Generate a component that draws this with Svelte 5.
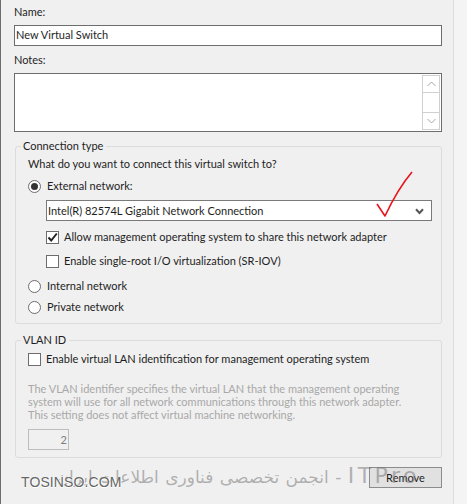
<script>
    let name = 'New Virtual Switch';
</script>

<div class="page">
    <div class="panel">
        <div class="label">Name:</div>
        <div class="field name">{name}</div>
        <div class="label notes-label">Notes:</div>
        <div class="field notes">
            <div class="scrollbar">
                <div class="arrow">
                    <svg width="9" height="6" viewBox="0 0 9 6"><path d="M0.5 5L4.5 1L8.5 5" fill="none" stroke="#a6a6a6" stroke-width="1"/></svg>
                </div>
                <div class="track"></div>
                <div class="arrow">
                    <svg width="9" height="6" viewBox="0 0 9 6"><path d="M0.5 1L4.5 5L8.5 1" fill="none" stroke="#a6a6a6" stroke-width="1"/></svg>
                </div>
            </div>
        </div>

        <fieldset class="group connection">
            <legend>Connection type</legend>
            <div class="question">What do you want to connect this virtual switch to?</div>
            <div class="option external"><span class="radio checked"></span>External network:</div>
            <div class="combo">
                <span>Intel(R) 82574L Gigabit Network Connection</span>
                <svg width="9" height="7" viewBox="0 0 9 7"><path d="M1 1.2L4.5 5L8 1.2" fill="none" stroke="#555" stroke-width="2"/></svg>
            </div>
            <div class="option sub share">
                <span class="box">
                    <svg width="11" height="11" viewBox="0 0 11 11"><path d="M1.5 5.5L4.2 8.5L9.8 1.5" fill="none" stroke="#222" stroke-width="2"/></svg>
                </span>Allow management operating system to share this network adapter
            </div>
            <div class="option sub iov"><span class="box"></span>Enable single-root I/O virtualization (SR-IOV)</div>
            <div class="option internal"><span class="radio"></span>Internal network</div>
            <div class="option private"><span class="radio"></span>Private network</div>
        </fieldset>

        <fieldset class="group vlan">
            <legend>VLAN ID</legend>
            <div class="option enable"><span class="box"></span>Enable virtual LAN identification for management operating system</div>
            <p class="hint">The VLAN identifier specifies the virtual LAN that the management operating system will use for all network communications through this network adapter. This setting does not affect virtual machine networking.</p>
            <div class="vlan-id">2</div>
        </fieldset>

        <div class="actions">
            <button class="remove">Remove</button>
        </div>
    </div>

    <svg class="tick" width="50" height="54" viewBox="0 0 50 54">
        <path d="M1 33L9 45C17 28 25 14 36 1" fill="none" stroke="#e8141c" stroke-width="1.6" stroke-linejoin="round"/>
    </svg>
    <div class="mark-fa" dir="rtl"><span class="mark-latin">ITPro</span> - انجمن تخصصی فناوری اطلاعات ایران</div>
    <div class="mark-en">TOSINSO.COM</div>
</div>

<style>
    :global(body) {
        margin: 0;
        background: #f4f4f4;
    }

    .page {
        position: relative;
        width: 467px;
        height: 504px;
        overflow: hidden;
        font-family: Lato, 'Noto Sans', sans-serif;
        font-size: 11px;
        line-height: 16px;
        color: #1e1e1e;
    }

    .panel {
        box-sizing: border-box;
        width: 454px;
        height: 504px;
        padding: 4px 11px 0 13px;
        background: #f0f0f0;
        border-left: 1px solid #6e6e6e;
        border-right: 1px solid #dcdcdc;
    }

    .field {
        box-sizing: border-box;
        width: 428px;
        background: #fff;
        border: 1px solid #6d6d6d;
    }

    .name {
        height: 21px;
        margin-top: 5px;
        padding: 0 1px;
        line-height: 18px;
    }

    .notes-label {
        margin-top: 6px;
    }

    .notes {
        height: 59px;
        margin-top: 5px;
        display: flex;
        justify-content: flex-end;
        padding: 1px;
    }

    .scrollbar {
        width: 16px;
        display: flex;
        flex-direction: column;
        border: 1px solid #d0d0d0;
    }

    .arrow {
        height: 16px;
        display: flex;
        align-items: center;
        justify-content: center;
    }

    .track {
        flex: 1;
        border-top: 1px solid #d0d0d0;
        border-bottom: 1px solid #d0d0d0;
    }

    .group {
        box-sizing: border-box;
        width: 427px;
        margin: 0 0 0 1px;
        padding: 0 0 0 12px;
        border: 1px solid #dcdcdc;
        border-radius: 3px;
        min-inline-size: 0;
    }

    .group legend {
        margin-left: -7px;
        padding: 0 3px 0 2px;
        line-height: 14px;
    }

    .connection {
        height: 185px;
        margin-top: 7px;
    }

    .vlan {
        height: 125px;
        margin-top: 9px;
    }

    .question {
        margin-top: 3px;
    }

    .option {
        display: flex;
        align-items: center;
        white-space: nowrap;
    }

    .external {
        margin-top: 6px;
    }

    .radio {
        box-sizing: border-box;
        width: 13px;
        height: 13px;
        margin-right: 6px;
        background: #fff;
        border: 1px solid #6d6d6d;
        border-radius: 50%;
        position: relative;
    }

    .radio.checked::after {
        content: '';
        position: absolute;
        inset: 2px;
        border-radius: 50%;
        background: #333;
    }

    .combo {
        box-sizing: border-box;
        width: 386px;
        height: 21px;
        margin: 6px 0 0 18px;
        padding: 1px 7px 0 1px;
        display: flex;
        align-items: center;
        justify-content: space-between;
        background: #fff;
        border: 1px solid #7a7a7a;
    }

    .box {
        box-sizing: border-box;
        width: 13px;
        height: 13px;
        margin-right: 5px;
        background: #fff;
        border: 1px solid #6d6d6d;
        display: flex;
        align-items: center;
        justify-content: center;
    }

    .sub {
        margin-left: 18px;
    }

    .share {
        margin-top: 8px;
    }

    .iov {
        margin-top: 8px;
    }

    .internal {
        margin-top: 9px;
    }

    .private {
        margin-top: 5px;
    }

    .enable {
        margin-top: 4px;
    }

    .hint {
        width: 392px;
        margin: 15px 0 0;
        line-height: 13px;
        color: #a8a8a8;
    }

    .vlan-id {
        box-sizing: border-box;
        width: 41px;
        height: 21px;
        margin-top: 8px;
        padding-right: 1px;
        text-align: right;
        line-height: 19px;
        color: #7d7d7d;
        border: 1px solid #bdbdbd;
    }

    .actions {
        width: 428px;
        display: flex;
        justify-content: flex-end;
        margin-top: 9px;
    }

    .remove {
        box-sizing: border-box;
        width: 73px;
        height: 21px;
        padding: 0;
        font: inherit;
        color: #1e1e1e;
        background: #e1e1e1;
        border: 1px solid #8c8c8c;
    }

    .tick {
        position: absolute;
        left: 376px;
        top: 171px;
    }

    .mark-fa {
        position: absolute;
        left: 20px;
        top: 464px;
        width: 400px;
        font-family: 'DejaVu Sans', sans-serif;
        font-size: 17px;
        line-height: 24px;
        word-spacing: 1px;
        white-space: nowrap;
        color: rgba(120, 120, 120, 0.55);
    }

    .mark-latin {
        font-size: 22px;
        letter-spacing: 3.5px;
    }

    .mark-en {
        position: absolute;
        left: 21px;
        top: 474px;
        font-family: 'Liberation Sans', sans-serif;
        font-size: 14px;
        line-height: 16px;
        letter-spacing: 0.1px;
        color: #666;
        text-shadow: 0 1px 0 #fff, 1px 0 0 #fff;
    }
</style>
